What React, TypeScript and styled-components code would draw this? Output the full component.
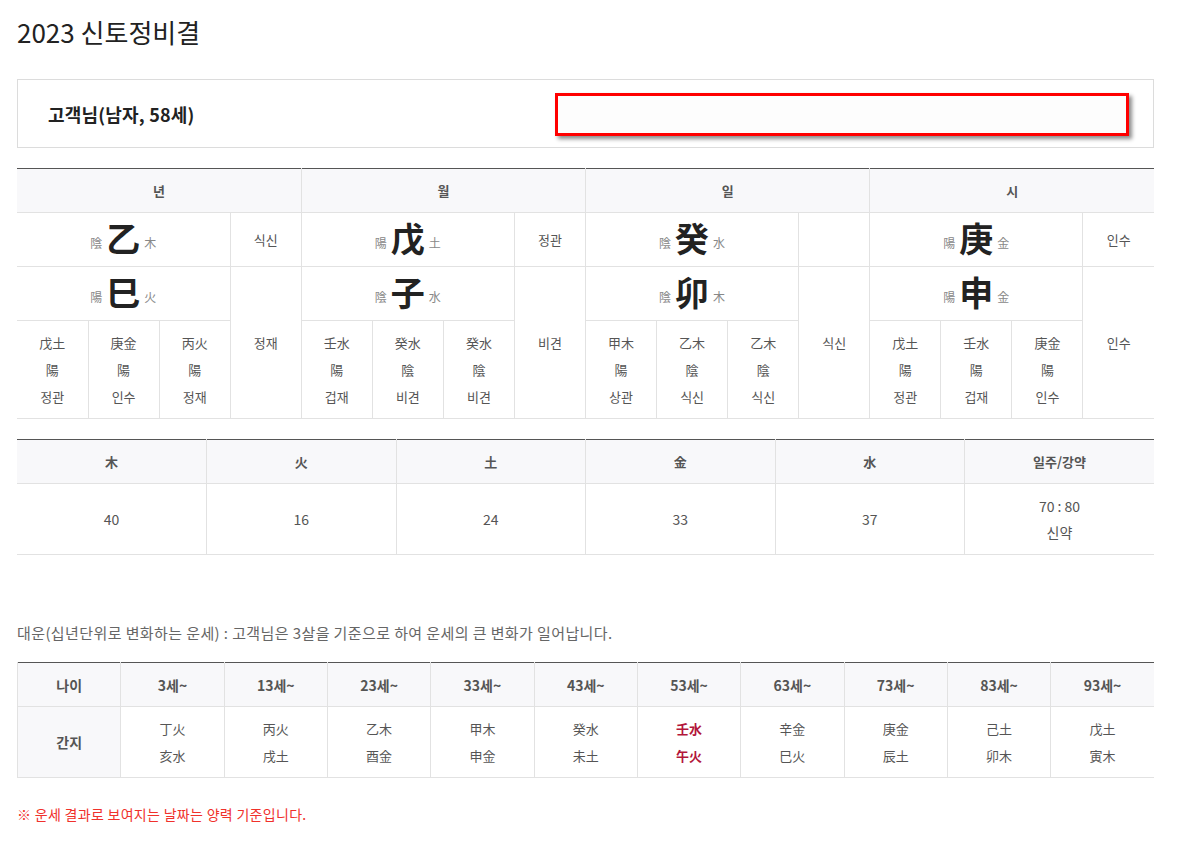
import React from "react";
import styled, { createGlobalStyle } from "styled-components";

const Global = createGlobalStyle`
  html, body { margin: 0; padding: 0; background: #fff; }
  body {
    font-family: "Noto Sans CJK KR", "Noto Sans", sans-serif;
    color: #333;
  }
  * { box-sizing: border-box; }
`;

const Page = styled.div`
  width: 1181px;
  padding: 13px 27px 30px 17px;
`;

const Title = styled.h1`
  margin: 0;
  font-size: 26px;
  font-weight: 400;
  color: #222;
  line-height: 38px;
  letter-spacing: 0;
`;

const InfoBox = styled.div`
  margin-top: 28px;
  height: 69px;
  border: 1px solid #dcdcdc;
  display: flex;
  align-items: center;
  justify-content: space-between;
  padding: 0 24px 0 30px;
`;

const InfoLabel = styled.div`
  font-size: 18px;
  font-weight: 700;
  color: #222;
  letter-spacing: 0.2px;
`;

const RedBox = styled.div`
  width: 574px;
  height: 43px;
  border: 3px solid #ff0000;
  background: #fdfdfd;
  box-shadow: 3px 3px 4px rgba(0, 0, 0, 0.45);
  margin-top: 2px;
`;

const Table = styled.table<{ $mt: number }>`
  width: 100%;
  margin-top: ${(p) => p.$mt}px;
  border-collapse: collapse;
  table-layout: fixed;
  border-top: 1px solid #555;
  font-size: 13px;
  color: #555;
`;

const Th = styled.th<{ $first?: boolean }>`
  height: 44px;
  padding: 0;
  background: #f8f8fa;
  font-weight: 700;
  font-size: 13px;
  color: #555;
  text-align: center;
  border-bottom: 1px solid #e2e2e2;
  border-left: 1px solid #e2e2e2;
  &:first-child {
    border-left: ${(p) => (p.$first ? "1px solid #e2e2e2" : "none")};
  }
`;

const DaeunTh = styled(Th)`
  font-size: 14px;
  font-weight: 700;
  color: #555;
`;

const Td = styled.td<{ $h?: number; $gray?: boolean; $bold?: boolean; $fs?: number }>`
  height: ${(p) => (p.$h ? `${p.$h}px` : "auto")};
  padding: 0;
  text-align: center;
  vertical-align: middle;
  border-bottom: 1px solid #e2e2e2;
  border-left: 1px solid #e2e2e2;
  background: ${(p) => (p.$gray ? "#f8f8fa" : "#fff")};
  font-weight: ${(p) => (p.$bold ? 700 : 400)};
  font-size: ${(p) => (p.$fs ? p.$fs : p.$bold ? 14 : 13)}px;
  color: #555;
  line-height: 27px;
  &:first-child {
    border-left: ${(p) => (p.$gray ? "1px solid #e2e2e2" : "none")};
  }
`;

const MainChar = styled.div`
  display: flex;
  align-items: flex-end;
  justify-content: center;
  gap: 4px;
  line-height: 1;
  padding-bottom: 4px;
`;

const Small = styled.span`
  font-size: 12px;
  color: #888;
  padding-bottom: 6px;
`;

const Big = styled.span`
  font-size: 34px;
  font-weight: 700;
  color: #222;
`;

const Line = styled.div<{ $lh?: number }>`
  line-height: ${(p) => p.$lh ?? 27}px;
`;

const Desc = styled.p`
  margin: 68px 0 0;
  font-size: 15px;
  color: #666;
  line-height: 20px;
  letter-spacing: 0.4px;
`;

const Hl = styled.div<{ $hl?: boolean }>`
  line-height: 27px;
  color: ${(p) => (p.$hl ? "#b3163b" : "#555")};
  font-weight: ${(p) => (p.$hl ? 700 : 400)};
`;

const Note = styled.p`
  margin: 26px 0 0;
  font-size: 14px;
  color: #f0312b;
  line-height: 20px;
  letter-spacing: 0.3px;
`;

type Pillar = {
  name: string;
  stem: [string, string, string];
  branch: [string, string, string];
  stemGod: string;
  branchGod: string;
  hidden: [string, string, string][];
};

const pillars: Pillar[] = [
  {
    name: "년",
    stem: ["陰", "乙", "木"],
    branch: ["陽", "巳", "火"],
    stemGod: "식신",
    branchGod: "정재",
    hidden: [
      ["戊土", "陽", "정관"],
      ["庚金", "陽", "인수"],
      ["丙火", "陽", "정재"],
    ],
  },
  {
    name: "월",
    stem: ["陽", "戊", "土"],
    branch: ["陰", "子", "水"],
    stemGod: "정관",
    branchGod: "비견",
    hidden: [
      ["壬水", "陽", "겁재"],
      ["癸水", "陰", "비견"],
      ["癸水", "陰", "비견"],
    ],
  },
  {
    name: "일",
    stem: ["陰", "癸", "水"],
    branch: ["陰", "卯", "木"],
    stemGod: "",
    branchGod: "식신",
    hidden: [
      ["甲木", "陽", "상관"],
      ["乙木", "陰", "식신"],
      ["乙木", "陰", "식신"],
    ],
  },
  {
    name: "시",
    stem: ["陽", "庚", "金"],
    branch: ["陽", "申", "金"],
    stemGod: "인수",
    branchGod: "인수",
    hidden: [
      ["戊土", "陽", "정관"],
      ["壬水", "陽", "겁재"],
      ["庚金", "陽", "인수"],
    ],
  },
];

const elements = [
  { h: "木", v: ["40"] },
  { h: "火", v: ["16"] },
  { h: "土", v: ["24"] },
  { h: "金", v: ["33"] },
  { h: "水", v: ["37"] },
  { h: "일주/강약", v: ["70 : 80", "신약"] },
];

const daeun = [
  { age: "3세~", a: "丁火", b: "亥水" },
  { age: "13세~", a: "丙火", b: "戌土" },
  { age: "23세~", a: "乙木", b: "酉金" },
  { age: "33세~", a: "甲木", b: "申金" },
  { age: "43세~", a: "癸水", b: "未土" },
  { age: "53세~", a: "壬水", b: "午火", hl: true },
  { age: "63세~", a: "辛金", b: "巳火" },
  { age: "73세~", a: "庚金", b: "辰土" },
  { age: "83세~", a: "己土", b: "卯木" },
  { age: "93세~", a: "戊土", b: "寅木" },
];

function Char({ c }: { c: [string, string, string] }) {
  return (
    <MainChar>
      <Small>{c[0]}</Small>
      <Big>{c[1]}</Big>
      <Small>{c[2]}</Small>
    </MainChar>
  );
}

export default function App() {
  return (
    <Page>
      <Global />
      <Title>2023 신토정비결</Title>
      <InfoBox>
        <InfoLabel>고객님(남자, 58세)</InfoLabel>
        <RedBox />
      </InfoBox>

      <Table $mt={20}>
        <colgroup>
          {Array.from({ length: 16 }).map((_, i) => (
            <col key={i} />
          ))}
        </colgroup>
        <thead>
          <tr>
            {pillars.map((p) => (
              <Th key={p.name} colSpan={4}>
                {p.name}
              </Th>
            ))}
          </tr>
        </thead>
        <tbody>
          <tr>
            {pillars.map((p) => (
              <React.Fragment key={p.name}>
                <Td colSpan={3} $h={54}>
                  <Char c={p.stem} />
                </Td>
                <Td>{p.stemGod}</Td>
              </React.Fragment>
            ))}
          </tr>
          <tr>
            {pillars.map((p) => (
              <React.Fragment key={p.name}>
                <Td colSpan={3} $h={54}>
                  <Char c={p.branch} />
                </Td>
                <Td rowSpan={2}>{p.branchGod}</Td>
              </React.Fragment>
            ))}
          </tr>
          <tr>
            {pillars.map((p) =>
              p.hidden.map((h, i) => (
                <Td key={p.name + i} $h={98}>
                  <Line>{h[0]}</Line>
                  <Line>{h[1]}</Line>
                  <Line>{h[2]}</Line>
                </Td>
              ))
            )}
          </tr>
        </tbody>
      </Table>

      <Table $mt={20}>
        <thead>
          <tr>
            {elements.map((e) => (
              <Th key={e.h}>{e.h}</Th>
            ))}
          </tr>
        </thead>
        <tbody>
          <tr>
            {elements.map((e) => (
              <Td key={e.h} $h={71} $fs={14}>
                {e.v.map((v) => (
                  <Line key={v} $lh={26}>
                    {v}
                  </Line>
                ))}
              </Td>
            ))}
          </tr>
        </tbody>
      </Table>

      <Desc>
        대운(십년단위로 변화하는 운세) : 고객님은 3살을 기준으로 하여 운세의 큰 변화가 일어납니다.
      </Desc>

      <Table $mt={19}>
        <thead>
          <tr>
            <DaeunTh $first>나이</DaeunTh>
            {daeun.map((d) => (
              <DaeunTh key={d.age}>{d.age}</DaeunTh>
            ))}
          </tr>
        </thead>
        <tbody>
          <tr>
            <Td $gray $bold $h={71}>
              간지
            </Td>
            {daeun.map((d) => (
              <Td key={d.age}>
                <Hl $hl={d.hl}>{d.a}</Hl>
                <Hl $hl={d.hl}>{d.b}</Hl>
              </Td>
            ))}
          </tr>
        </tbody>
      </Table>

      <Note>※ 운세 결과로 보여지는 날짜는 양력 기준입니다.</Note>
    </Page>
  );
}
